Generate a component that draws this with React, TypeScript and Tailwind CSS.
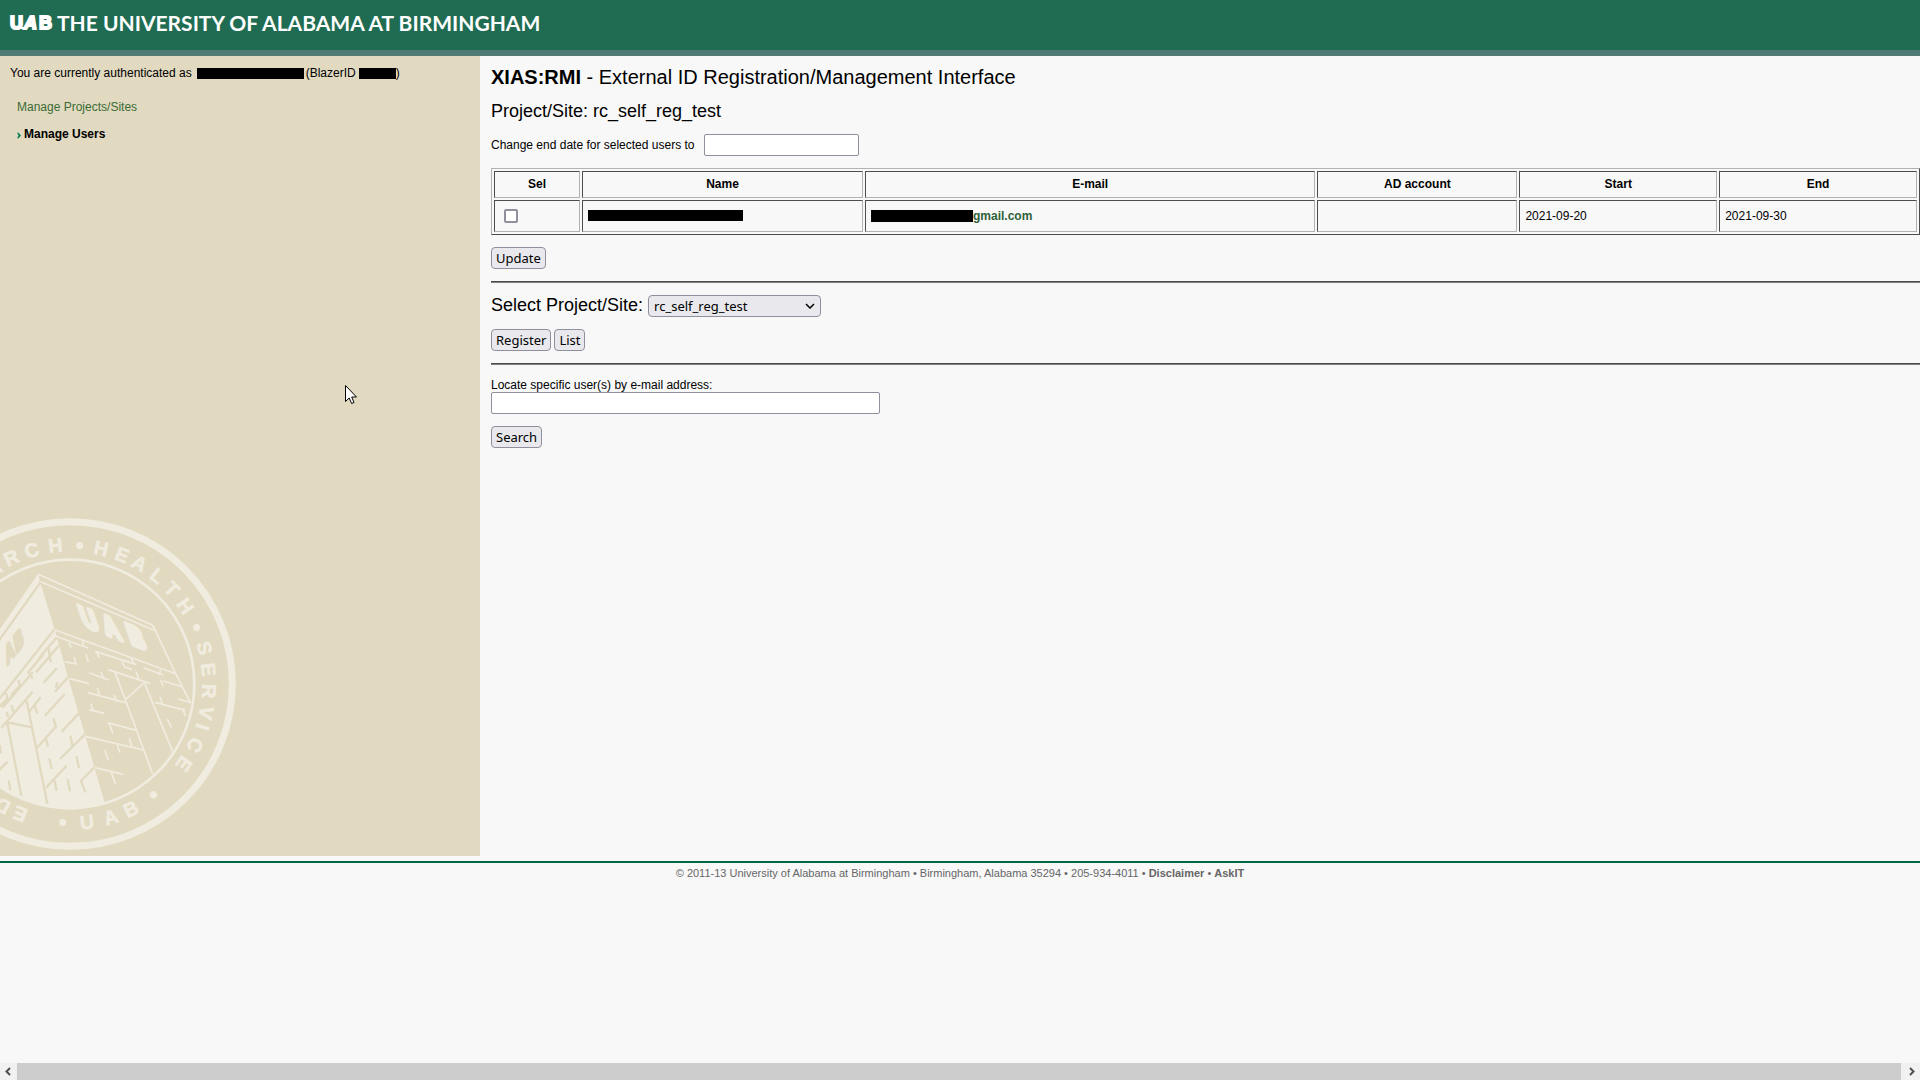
import type { ReactNode } from 'react';

interface SealMark {
  char: string;
  angle: number;
}

interface UserRow {
  start: string;
  end: string;
}

// Lettering around the seal, in degrees clockwise from the top
const outerMarks: SealMark[] = [
  { char: 'R', angle: -25 },
  { char: 'C', angle: -16 },
  { char: 'H', angle: -6 },
  { char: 'H', angle: 13 },
  { char: 'E', angle: 22 },
  { char: 'A', angle: 30 },
  { char: 'L', angle: 39 },
  { char: 'T', angle: 47 },
  { char: 'H', angle: 56 },
  { char: 'S', angle: 75 },
  { char: 'E', angle: 84 },
  { char: 'R', angle: 93 },
  { char: 'V', angle: 102 },
  { char: 'I', angle: 108 },
  { char: 'C', angle: 116 },
  { char: 'E', angle: 125 },
  { char: 'E', angle: 201 },
  { char: 'D', angle: 209 },
];

// These read left to right along the bottom
const bottomMarks: SealMark[] = [
  { char: 'B', angle: -26 },
  { char: 'A', angle: -17 },
  { char: 'U', angle: -7 },
];

const dotAngles = [4, 66, 143, 183];

const columns = ['Sel', 'Name', 'E-mail', 'AD account', 'Start', 'End'];

const rows: UserRow[] = [{ start: '2021-09-20', end: '2021-09-30' }];

function Seal() {
  return (
    <svg viewBox="0 0 720 1020" className="block h-[340px] w-[240px]" aria-hidden="true">
      <defs>
        <clipPath id="seal-inner">
          <circle cx="210" cy="510" r="375" />
        </clipPath>
      </defs>
      <circle cx="210" cy="510" r="487" fill="none" stroke="#f0ecdf" strokeWidth="21" />

      <g clipPath="url(#seal-inner)">
        <g transform="translate(0 153)" strokeLinejoin="round">
          <path d="M115 25 L120 50 L163 190 L205 340 L255 510 L316 720 L300 760 L-20 760 L-20 222 Z" fill="#f0ecdf" />
          <g fill="none" stroke="#e1d9c0" strokeWidth="7">
            <path d="M123 50 L-10 236" />
            <path d="M164 192 L-10 412" />
            <path d="M172 215 L118 278 M178 240 L108 322 M131 266 L85 322 L98 340 M152 292 L145 246" />
            <path d="M98 322 L8 428 M56 345 L60 362 L34 390 M48 378 L10 424 M18 384 L22 400 L-4 428" />
            <path d="M170 310 L131 353 M204 337 L165 380 M172 352 L168 370" />
            <path d="M98 380 L4 488 M122 396 L88 440 M104 420 L112 446 M34 420 L40 440 M20 440 L24 456" />
            <path d="M194 387 L135 452 M236 446 L185 500 M170 482 L110 550 M160 460 L168 486 M138 522 L144 545" />
            <path d="M255 508 L180 582 M211 512 L218 544 M148 580 L155 612 M229 574 L237 609" />
            <path d="M284 606 L243 648 L256 682 M200 602 L138 668 M163 646 L170 677 M203 643 L210 679" />
            <path d="M80 408 L142 716 M22 472 L96 487 M22 474 L64 692 M22 590 L-6 620 M26 646 L31 676 M0 540 L2 566" />
          </g>
          <g fill="none" stroke="#f0ecdf" strokeWidth="5">
            <path d="M115 28 L458 181 L466 196" />
            <path d="M122 50 L460 195 M460 184 L527 326 L572 415" />
            <path d="M163 194 L527 326" />
            <path d="M168 214 L264 249 M246 222 L250 240 M206 232 L214 248 M194 290 L228 297 L222 276 M258 268 L265 292" />
            <path d="M285 259 L408 298 M290 260 L297 278 M394 280 L402 298 M366 290 L374 306 L396 313 M430 308 L490 330 M482 314 L477 330" />
            <path d="M325 314 L450 355 M408 320 L416 342 M267 323 L326 345 M302 320 L310 338" />
            <path d="M206 340 L267 356 M264 383 L376 413 M292 368 L298 390 M342 390 L350 410" />
            <path d="M345 322 L376 404 L433 353 M376 404 L458 627 M433 353 L518 560" />
            <path d="M482 345 L490 364 M490 348 L543 364 M465 412 L556 436 M480 396 L487 416 M534 402 L572 412 M548 430 L556 454 M502 462 L514 488" />
            <path d="M267 434 L313 445 M272 415 L280 436 M322 473 L410 496 M328 476 L339 505" />
            <path d="M256 514 L431 555 M352 540 L360 563 M388 518 L396 546 M314 555 L325 586 M284 608 L370 628 M334 622 L346 656" />
          </g>
          <text
            transform="translate(252 182) rotate(21) skewX(40)"
            fill="#f0ecdf"
            stroke="#f0ecdf"
            strokeWidth="13"
            fontSize="72"
            fontWeight="700"
            x="0 72 152"
            className="font-['Liberation_Sans',Arial,sans-serif]"
          >
            UAB
          </text>
          <text
            transform="translate(22 300) rotate(-52) skewX(-40)"
            fill="#e1d9c0"
            stroke="#e1d9c0"
            strokeWidth="8"
            fontSize="54"
            fontWeight="700"
            x="0 44"
            className="font-['Liberation_Sans',Arial,sans-serif]"
          >
            AB
          </text>
        </g>
      </g>

      <circle cx="210" cy="510" r="373" fill="none" stroke="#f0ecdf" strokeWidth="8" />
      <path d="M-6 160 L8 174" stroke="#f0ecdf" strokeWidth="9" />
      <g
        fill="#f0ecdf"
        stroke="#f0ecdf"
        strokeWidth="2"
        fontSize="59"
        fontWeight="700"
        textAnchor="middle"
        className="font-['Liberation_Sans',Arial,sans-serif]"
      >
        {outerMarks.map(mark => (
          <text key={mark.angle} x="210" y="113" transform={`rotate(${mark.angle} 210 510)`}>
            {mark.char}
          </text>
        ))}
        {bottomMarks.map(mark => (
          <text key={mark.angle} x="210" y="948" transform={`rotate(${mark.angle} 210 510)`}>
            {mark.char}
          </text>
        ))}
        {dotAngles.map(angle => (
          <circle key={angle} cx="210" cy="94" r="10" transform={`rotate(${angle} 210 510)`} />
        ))}
      </g>
    </svg>
  );
}

function Header() {
  return (
    <header className="flex h-14 items-center border-b-[6px] border-[#507a76] bg-[#206c52] pb-1 pl-2">
      <svg viewBox="0 0 49 24" className="h-6 w-[49px]" role="img" aria-label="UAB">
        <g
          fill="#ffffff"
          stroke="#ffffff"
          strokeWidth="2"
          fontSize="18"
          fontWeight="700"
          className="font-['Liberation_Sans',Arial,sans-serif]"
        >
          <text x="2" y="18">U</text>
          <text x="16" y="18" fontStyle="italic">A</text>
          <text x="31" y="18">B</text>
          <path d="M7 17 H18" />
        </g>
      </svg>
      <span className="font-[Lato,sans-serif] text-[21px] font-bold leading-6 text-white">
        THE UNIVERSITY OF ALABAMA AT BIRMINGHAM
      </span>
    </header>
  );
}

function Sidebar() {
  return (
    <aside className="flex w-1/4 shrink-0 flex-col justify-between overflow-hidden bg-[#e1d9c0] pb-[2px]">
      <div className="pt-2">
        <p className="flex items-center pl-[10px] leading-[18px]">
          You are currently authenticated as
          <span className="ml-[5px] mr-[2px] h-[11px] w-[107px] bg-black" />
          (BlazerID
          <span className="ml-[3px] h-[11px] w-[37px] bg-black" />)
        </p>
        <nav className="mt-4 flex flex-col gap-[9px] pl-[17px] leading-[18px]">
          <a href="#projects" className="text-[#3a6b35]">Manage Projects/Sites</a>
          <a href="#users" className="flex items-center font-bold">
            <svg viewBox="0 0 5 7" className="mr-[3px] mt-[2px] h-[7px] w-1" aria-hidden="true">
              <path d="M0 0 H2 L5 3.5 L2 7 H0 L2 3.5 Z" fill="#007a53" />
            </svg>
            Manage Users
          </a>
        </nav>
      </div>
      <Seal />
    </aside>
  );
}

function PushButton({ children }: { children: ReactNode }) {
  return (
    <button
      type="button"
      className="h-[22px] rounded-[4px] border border-[#8f8f9d] bg-[#e9e9ed] px-1 font-['Noto_Sans',sans-serif] text-[13px] leading-5"
    >
      {children}
    </button>
  );
}

function Rule() {
  return <hr className="h-[2px] border-y border-t-[#4d4d4d] border-b-[#808080]" />;
}

function UserTable() {
  const cell = 'border border-t-[#4d4d4d] border-l-[#4d4d4d] border-r-[#b2b2b2] border-b-[#b2b2b2] pb-px';

  return (
    <table className="w-full table-fixed border-separate border-spacing-[2px] border border-t-[#b2b2b2] border-l-[#b2b2b2] border-r-[#4d4d4d] border-b-[#4d4d4d]">
      <colgroup>
        <col className="w-[86px]" />
        <col className="w-[281px]" />
        <col />
        <col className="w-[200px]" />
        <col className="w-[14%]" />
        <col className="w-[14%]" />
      </colgroup>
      <thead>
        <tr>
          {columns.map(name => (
            <th key={name} className={`${cell} h-[27px] text-center font-bold`}>{name}</th>
          ))}
        </tr>
      </thead>
      <tbody>
        {rows.map(row => (
          <tr key={row.start}>
            <td className={`${cell} h-8 pl-[9px]`}>
              <input
                type="checkbox"
                aria-label="Select user"
                className="block size-[14px] appearance-none rounded-[2px] border-2 border-[#8f8f9d] bg-white"
              />
            </td>
            <td className={`${cell} px-[5px]`}>
              <span className="block h-[11px] w-[155px] bg-black" />
            </td>
            <td className={`${cell} px-[5px]`}>
              <span className="flex items-center">
                <span className="h-3 w-[102px] bg-black" />
                <a href="#user" className="font-bold text-[#2f6138]">gmail.com</a>
              </span>
            </td>
            <td className={cell} />
            <td className={`${cell} px-[5px]`}>{row.start}</td>
            <td className={`${cell} px-[5px]`}>{row.end}</td>
          </tr>
        ))}
      </tbody>
    </table>
  );
}

function Main() {
  return (
    <main className="min-w-0 flex-1 pl-[11px] pt-2">
      <h1 className="text-xl leading-[26px]">
        <b>XIAS:RMI</b> - External ID Registration/Management Interface
      </h1>
      <h2 className="mt-2 text-lg leading-[26px]">Project/Site: rc_self_reg_test</h2>
      <div className="mt-[10px] flex h-[22px] items-center">
        <label htmlFor="end-date">Change end date for selected users to</label>
        <input id="end-date" type="text" className="ml-[10px] h-[22px] w-[155px] rounded-[2px] border border-[#8f8f9d] bg-white px-1" />
      </div>
      <div className="mt-3">
        <UserTable />
      </div>
      <div className="mb-3 mt-3 flex">
        <PushButton>Update</PushButton>
      </div>
      <Rule />
      <div className="mt-3 flex h-[22px] items-center">
        <label htmlFor="project" className="pb-[2px] text-lg leading-5">Select Project/Site:</label>
        <div className="relative ml-[5px]">
          <select
            id="project"
            className="block h-[22px] w-[173px] appearance-none rounded-[4px] border border-[#8f8f9d] bg-[#e9e9ed] pl-[5px] font-['Noto_Sans',sans-serif] text-[13px] leading-5"
          >
            <option>rc_self_reg_test</option>
          </select>
          <svg viewBox="0 0 10 6" className="pointer-events-none absolute right-[6px] top-2 h-[6px] w-[10px]" aria-hidden="true">
            <path d="M1 1 L5 5 L9 1" fill="none" stroke="#000000" strokeWidth="1.5" />
          </svg>
        </div>
      </div>
      <div className="mb-3 mt-3 flex gap-[3px]">
        <PushButton>Register</PushButton>
        <PushButton>List</PushButton>
      </div>
      <Rule />
      <div className="mt-3 flex flex-col items-start">
        <label htmlFor="email" className="pt-px leading-[14px]">Locate specific user(s) by e-mail address:</label>
        <input id="email" type="text" className="h-[22px] w-[389px] rounded-[2px] border border-[#8f8f9d] bg-white px-1" />
      </div>
      <div className="mt-3 flex">
        <PushButton>Search</PushButton>
      </div>
    </main>
  );
}

function ScrollBar() {
  return (
    <div className="mt-auto flex h-[17px] bg-[#f1f1f1]">
      <button type="button" aria-label="Scroll left" className="flex w-[17px] items-center justify-center pr-[2px]">
        <svg viewBox="0 0 6 9" className="h-[9px] w-[6px]">
          <path d="M5 1 L1.5 4.5 L5 8" fill="none" stroke="#505050" strokeWidth="2" />
        </svg>
      </button>
      <div className="flex-1 bg-[#cdcdcd]" />
      <button type="button" aria-label="Scroll right" className="flex w-[19px] items-center justify-center pl-[2px]">
        <svg viewBox="0 0 6 9" className="h-[9px] w-[6px]">
          <path d="M1 1 L4.5 4.5 L1 8" fill="none" stroke="#505050" strokeWidth="2" />
        </svg>
      </button>
    </div>
  );
}

function Pointer() {
  return (
    <svg viewBox="0 0 12 19" className="pointer-events-none absolute left-[345px] top-[385px] h-[19px] w-3" aria-hidden="true">
      <path d="M0.5 0.5 V16.5 L4.2 13 L6.6 18.5 L9 17.5 L6.7 12 H11.5 Z" fill="#ffffff" stroke="#000000" />
    </svg>
  );
}

export default function App() {
  return (
    <div className="relative flex min-h-screen flex-col bg-[#f8f8f8] font-['Liberation_Sans',Arial,sans-serif] text-xs text-black">
      <Header />
      <div className="flex min-h-[800px]">
        <Sidebar />
        <Main />
      </div>
      <footer className="mt-[5px] border-t-2 border-[#006747] pt-1 text-center text-[11px] leading-3 text-[#666666]">
        © 2011-13 University of Alabama at Birmingham • Birmingham, Alabama 35294 • 205-934-4011 •{' '}
        <a href="#disclaimer" className="font-bold">Disclaimer</a> •{' '}
        <a href="#askit" className="font-bold">AskIT</a>
      </footer>
      <ScrollBar />
      <Pointer />
    </div>
  );
}
